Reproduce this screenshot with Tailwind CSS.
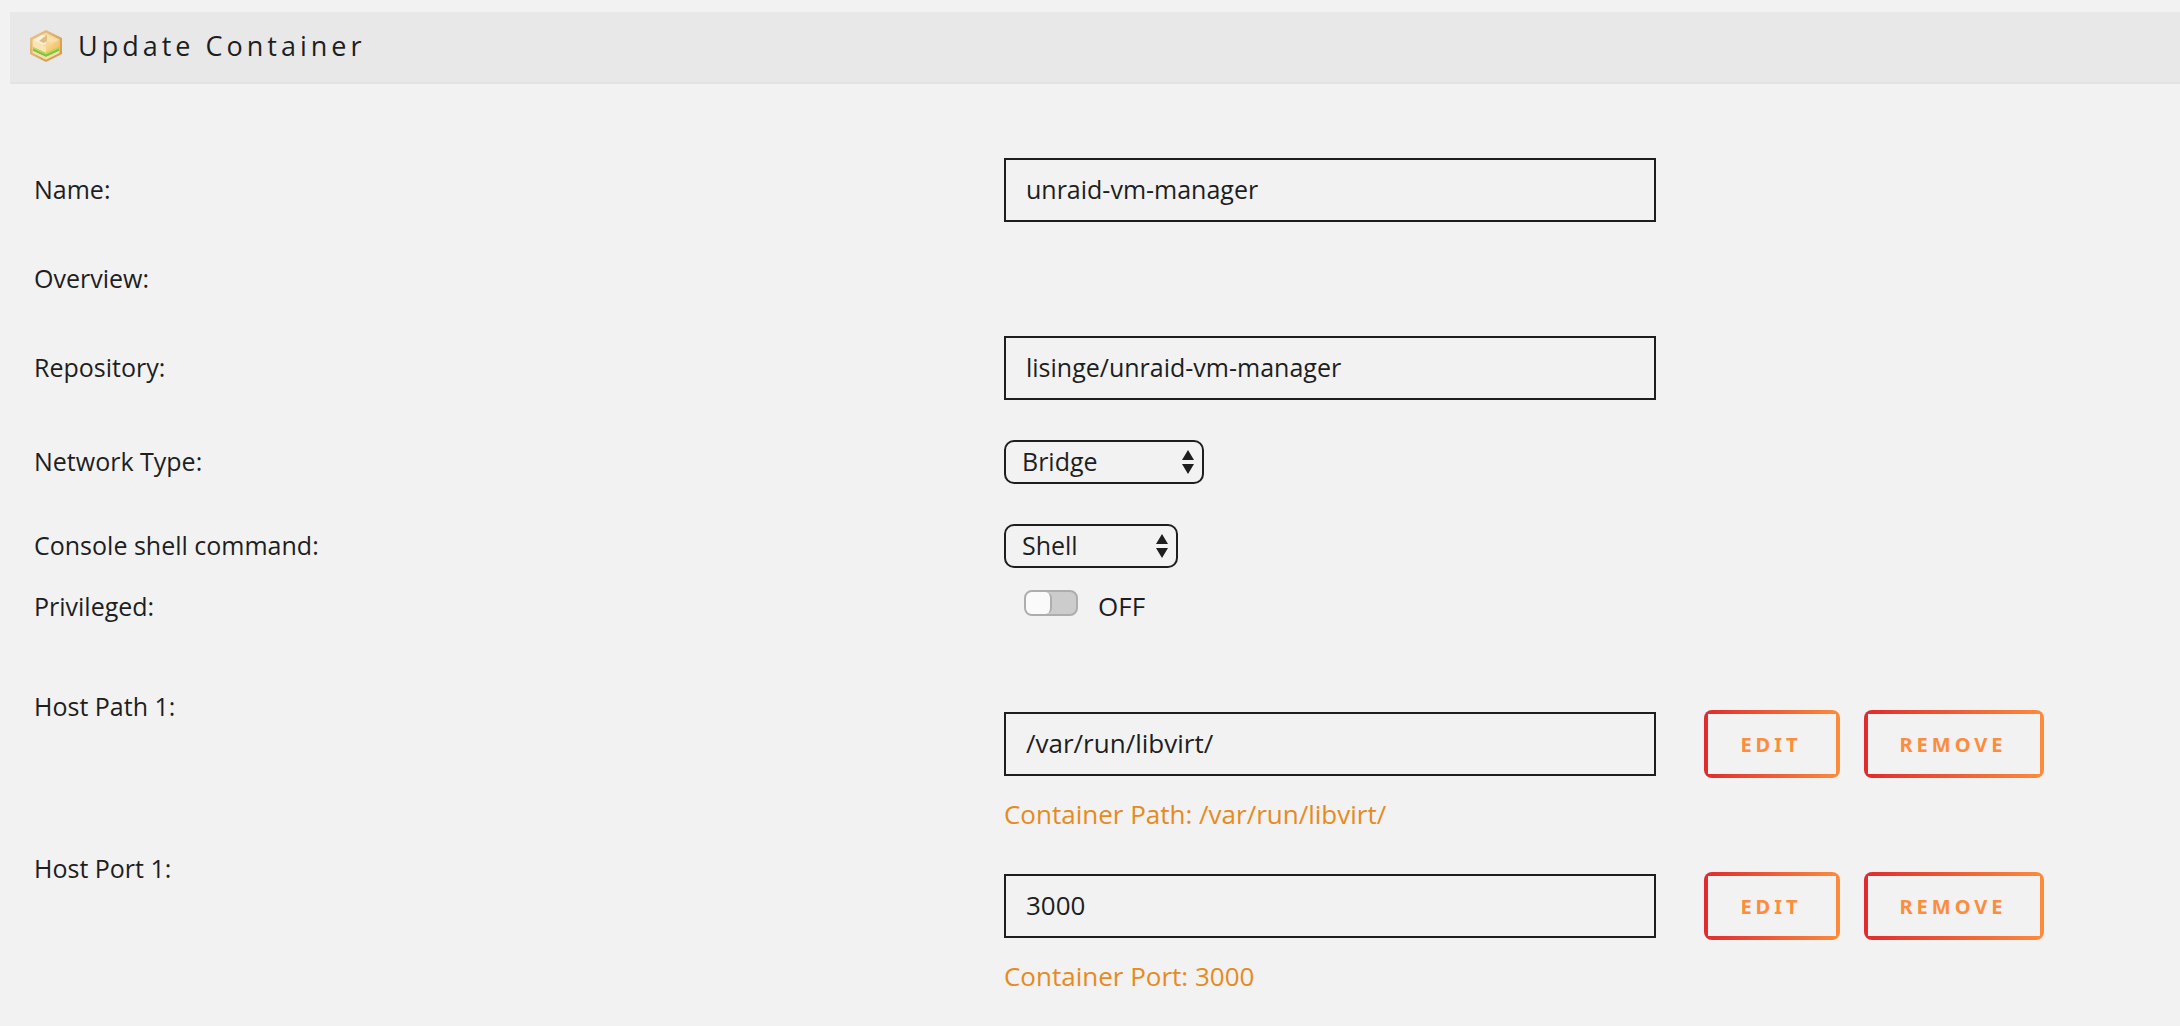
<!DOCTYPE html>
<html lang="en">
<head>
<meta charset="utf-8">
<meta name="viewport" content="width=device-width, initial-scale=1">
<title>Update Container</title>
<script src="https://cdn.jsdelivr.net/npm/@tailwindcss/browser@4"></script>
</head>
<body class="min-h-screen overflow-x-hidden bg-[#f2f2f2] pt-3 font-['Open_Sans',sans-serif] text-[25px]/8 text-[#1e1e1f]">
  <header class="ml-[10px] flex h-[72px] items-center gap-4 border-b-2 border-[#e3e3e3] bg-[#e8e8e8] pb-0.5 pl-5">
    <svg class="size-8" viewBox="0 0 32 32" aria-hidden="true">
      <defs>
        <linearGradient id="rim" x1="0" x2="1" y1="0" y2="1"><stop offset="0" stop-color="#ecc98f"/><stop offset=".6" stop-color="#d9a65c"/><stop offset="1" stop-color="#cf984c"/></linearGradient>
        <linearGradient id="crust" x1="0" x2="1" y1="0" y2="1"><stop offset="0" stop-color="#fae0a0"/><stop offset="1" stop-color="#f3b850"/></linearGradient>
      </defs>
      <path d="M16 0 32 8v16l-16 8L0 24V8z" fill="url(#rim)"/>
      <path d="M16 2.500 29.500 9.500v13.500L16 29.500 2.500 23V9.500z" fill="#f4dcae"/>
      <path d="M3 10 16 3l13 7-13 7z" fill="#f8d795"/>
      <path d="M3 10 12 5l5 1-1 8-3 1z" fill="#fcf1dc"/>
      <path d="M14 7l3-2v6l-3 2-5-2z" fill="#dfbc86"/>
      <path d="M17 5l10 5-6 3-4-2z" fill="#fae0ae"/>
      <path d="M3 10l13 7v6L3 17z" fill="#fae5b2"/>
      <path d="M29 10 16 17v6l13-6z" fill="url(#crust)"/>
      <path d="M3 17l13 6 13-6v4L16 27 3 21z" fill="#86c335"/>
      <path d="M3 17l13 6 13-6v1.500L16 24.500 3 18.500z" fill="#b9d966"/>
      <path d="M3 21l13 6 13-6v2L16 29.500 3 23z" fill="#f5dfae"/>
    </svg>
    <h1 class="text-[27px] tracking-[4px]">Update Container</h1>
  </header>

  <form class="mt-[74px] flex flex-col pl-[34px]">
    <div class="grid grid-cols-[45.2%_1fr] items-center">
      <label for="name" class="pb-0.5">Name:</label>
      <input id="name" type="text" value="unraid-vm-manager" class="h-16 w-[652px] border-2 border-[#1e1e1f] bg-transparent px-5 pb-0.5 outline-none">
    </div>

    <div class="mt-10">Overview:</div>

    <div class="mt-[42px] grid grid-cols-[45.2%_1fr] items-center">
      <label for="repository" class="pb-0.5">Repository:</label>
      <input id="repository" type="text" value="lisinge/unraid-vm-manager" class="h-16 w-[652px] border-2 border-[#1e1e1f] bg-transparent px-5 pb-0.5 outline-none">
    </div>

    <div class="mt-10 grid grid-cols-[45.2%_1fr] items-center">
      <label for="network" class="pb-0.5">Network Type:</label>
      <div class="relative w-[200px]">
        <select id="network" class="block h-11 w-full appearance-none rounded-[10px] border-2 border-[#1e1e1f] bg-transparent pb-0.5 pl-4 leading-8 outline-none">
          <option>Bridge</option>
        </select>
        <svg class="pointer-events-none absolute top-[10px] right-[10px] h-6 w-3" viewBox="0 0 12 24" fill="#1e1e1f" aria-hidden="true"><path d="M6 0l6 10H0zM0 14h12L6 24z"/></svg>
      </div>
    </div>

    <div class="mt-10 grid grid-cols-[45.2%_1fr] items-center">
      <label for="shell" class="pb-0.5">Console shell command:</label>
      <div class="relative w-[174px]">
        <select id="shell" class="block h-11 w-full appearance-none rounded-[10px] border-2 border-[#1e1e1f] bg-transparent pb-0.5 pl-4 leading-8 outline-none">
          <option>Shell</option>
        </select>
        <svg class="pointer-events-none absolute top-[10px] right-[10px] h-6 w-3" viewBox="0 0 12 24" fill="#1e1e1f" aria-hidden="true"><path d="M6 0l6 10H0zM0 14h12L6 24z"/></svg>
      </div>
    </div>

    <div class="mt-[22px] grid grid-cols-[45.2%_1fr] items-center">
      <label for="privileged">Privileged:</label>
      <div class="flex items-start pl-5">
        <input id="privileged" type="checkbox" role="switch" class="relative h-[26px] w-[54px] appearance-none rounded-lg border-2 border-[#adadad] bg-[#cccccc] before:absolute before:inset-y-0 before:left-0 before:w-[26px] before:rounded-md before:border-r-2 before:border-[#adadad] before:bg-[#fafafa]">
        <span class="pl-5 text-[26px]">OFF</span>
      </div>
    </div>

    <div class="mt-[68px] grid grid-cols-[45.2%_1fr] items-start">
      <label for="path1">Host Path 1:</label>
      <div class="pt-5">
        <div class="flex items-center">
          <input id="path1" type="text" value="/var/run/libvirt/" class="h-16 w-[652px] border-2 border-[#1e1e1f] bg-transparent px-5 pb-0.5 text-[26px] outline-none">
          <button type="button" class="ml-12 h-[68px] min-w-[136px] rounded-lg pt-0.5 pr-9 pl-[34px] font-['Noto_Sans',sans-serif] text-xl font-bold tracking-[4px] text-[#fd8c3c] [background:linear-gradient(#f2f2f2,#f2f2f2)_center/calc(100%_-_8px)_calc(100%_-_8px)_no-repeat,linear-gradient(90deg,#df2b2f,#fd8c3c)]">EDIT</button>
          <button type="button" class="ml-6 h-[68px] min-w-[180px] rounded-lg pt-0.5 pr-9 pl-[34px] font-['Noto_Sans',sans-serif] text-xl font-bold tracking-[4px] text-[#fd8c3c] [background:linear-gradient(#f2f2f2,#f2f2f2)_center/calc(100%_-_8px)_calc(100%_-_8px)_no-repeat,linear-gradient(90deg,#df2b2f,#fd8c3c)]">REMOVE</button>
        </div>
        <p class="mt-5 text-[26px]/8 text-[#e68a21]">Container Path: /var/run/libvirt/</p>
      </div>
    </div>

    <div class="mt-[22px] grid grid-cols-[45.2%_1fr] items-start">
      <label for="port1">Host Port 1:</label>
      <div class="pt-5">
        <div class="flex items-center">
          <input id="port1" type="text" value="3000" class="h-16 w-[652px] border-2 border-[#1e1e1f] bg-transparent px-5 pb-0.5 text-[26px] outline-none">
          <button type="button" class="ml-12 h-[68px] min-w-[136px] rounded-lg pt-0.5 pr-9 pl-[34px] font-['Noto_Sans',sans-serif] text-xl font-bold tracking-[4px] text-[#fd8c3c] [background:linear-gradient(#f2f2f2,#f2f2f2)_center/calc(100%_-_8px)_calc(100%_-_8px)_no-repeat,linear-gradient(90deg,#df2b2f,#fd8c3c)]">EDIT</button>
          <button type="button" class="ml-6 h-[68px] min-w-[180px] rounded-lg pt-0.5 pr-9 pl-[34px] font-['Noto_Sans',sans-serif] text-xl font-bold tracking-[4px] text-[#fd8c3c] [background:linear-gradient(#f2f2f2,#f2f2f2)_center/calc(100%_-_8px)_calc(100%_-_8px)_no-repeat,linear-gradient(90deg,#df2b2f,#fd8c3c)]">REMOVE</button>
        </div>
        <p class="mt-5 text-[26px]/8 text-[#e68a21]">Container Port: 3000</p>
      </div>
    </div>
  </form>
</body>
</html>
